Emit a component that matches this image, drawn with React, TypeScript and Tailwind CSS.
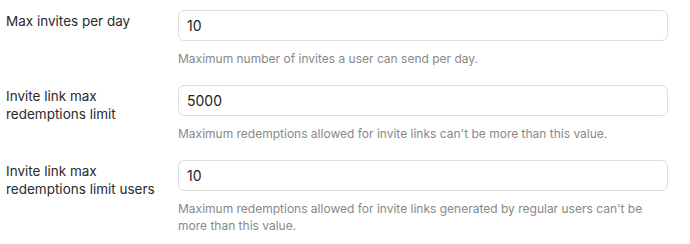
const settings = [
  {
    label: "Max invites per day",
    value: "10",
    help: "Maximum number of invites a user can send per day.",
  },
  {
    label: "Invite link max redemptions limit",
    value: "5000",
    help: "Maximum redemptions allowed for invite links can't be more than this value.",
  },
  {
    label: "Invite link max redemptions limit users",
    value: "10",
    help: "Maximum redemptions allowed for invite links generated by regular users can't be more than this value.",
  },
];

export default function App() {
  return (
    <div
      className="w-[690px] h-[244px] bg-white pt-[10px] pl-[6px] pr-[22px] text-[#222] antialiased"
      style={{ fontFamily: "Inter, 'Noto Sans', sans-serif" }}
    >
      {settings.map((s) => (
        <div key={s.label} className="grid grid-cols-[172px_1fr] mb-[18px]">
          <label className="pt-[2px] pr-4 text-[13.5px] leading-[18px] text-[#2a2a2a]">{s.label}</label>
          <div>
            <input
              type="text"
              defaultValue={s.value}
              className="block w-full h-[31px] rounded-[6px] border border-[#ddd] px-[8px] text-[14px] text-[#222] outline-none"
            />
            <p className="mt-[9px] text-[12px] leading-[17px] text-[#888]">{s.help}</p>
          </div>
        </div>
      ))}
    </div>
  );
}
